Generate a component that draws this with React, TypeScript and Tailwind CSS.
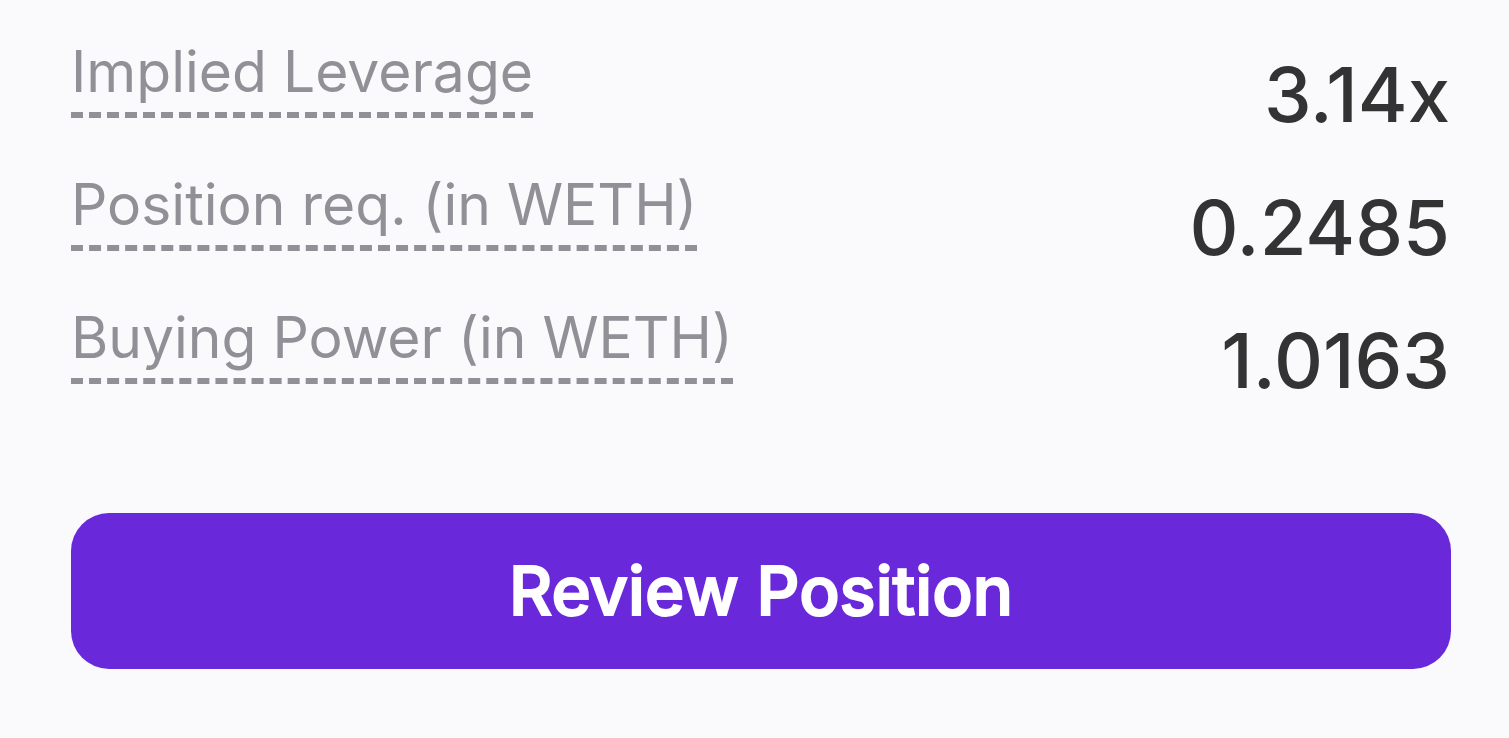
const rows = [
  { label: "Implied Leverage", value: "3.14x" },
  { label: "Position req. (in WETH)", value: "0.2485" },
  { label: "Buying Power (in WETH)", value: "1.0163" },
];

export default function App() {
  return (
    <main className="min-h-screen bg-[#fafafd] pt-9 pr-[58px] pb-[68px] pl-[71px] font-['Inter',sans-serif]">
      <dl className="flex flex-col gap-[33px]">
        {rows.map((row) => (
          <div key={row.label} className="flex h-[100px] items-start justify-between">
            <dt className="border-b-[6px] border-dashed border-[#919097] pb-1 text-[57px] leading-[72px] text-[#919097]">
              {row.label}
            </dt>
            <dd className="pt-[10px] pr-px text-[76px] leading-[96px] font-medium text-[#333333]">
              {row.value}
            </dd>
          </div>
        ))}
      </dl>
      <button
        type="button"
        className="mt-[111px] h-[156px] w-full rounded-[38px] bg-[#6929da] text-[67px] font-medium text-white [-webkit-text-stroke:2px_white]"
      >
        Review Position
      </button>
    </main>
  );
}
